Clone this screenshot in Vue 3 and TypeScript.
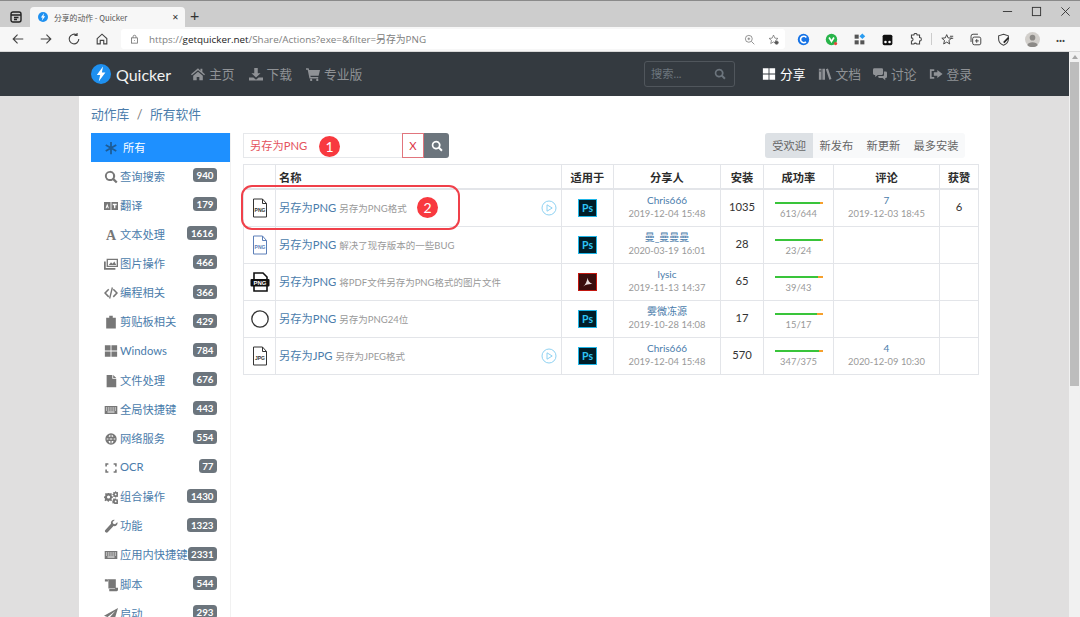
<template>
  <div class="screen">
    <div class="tabstrip">
      <svg class="tab-menu" viewBox="0 0 12 12"><rect x="1" y="1" width="10" height="10" rx="2" /><path d="M1 4h10M4 6.5h4.5M4 8.5h3" /></svg>
      <div class="tab">
        <svg class="bolt-logo small" viewBox="0 0 20 20"><circle cx="10" cy="10" r="10" /><path d="M12 2.5 5.8 11h3.4l-1.5 6.5L14.4 8.400h-3.500z" /></svg>
        <span class="tab-title">分享的动作 - Quicker</span>
        <span class="tab-close">✕</span>
      </div>
      <span class="tab-plus">+</span>
      <div class="win-controls">
        <svg viewBox="0 0 12 12"><path d="M1 6h10" /></svg>
        <svg viewBox="0 0 12 12"><rect x="1.500" y="1.500" width="9" height="9" /></svg>
        <svg viewBox="0 0 12 12"><path d="M1.500 1.500l9 9M10.500 1.500l-9 9" /></svg>
      </div>
    </div>

    <div class="toolbar">
      <svg class="tb" viewBox="0 0 16 16"><path d="M14 8H2.500M7.500 3l-5 5 5 5" /></svg>
      <svg class="tb" viewBox="0 0 16 16"><path d="M2 8h11.500M8.500 3l5 5-5 5" /></svg>
      <svg class="tb" viewBox="0 0 16 16"><path d="M13.500 8A5.500 5.500 0 1 1 11 3.400M11.500 1v3h-3" /></svg>
      <svg class="tb" viewBox="0 0 16 16"><path d="M2.500 7.500 8 2.500l5.500 5v6h-3.500v-4H6v4H2.500z" /></svg>
      <div class="address">
        <svg class="lock" viewBox="0 0 12 12"><rect x="2" y="4.500" width="8" height="7" /><path d="M4 4.500V3a2 2 0 0 1 4 0v1.500M6 7.500v1" /></svg>
        <span class="url">https://<b>getquicker.net</b>/Share/Actions?exe=&amp;filter=另存为PNG</span>
        <svg class="addr-ic zoom" viewBox="0 0 16 16"><circle cx="7" cy="7" r="5" /><path d="M11 11l4 4M5 7h4M7 5v4" /></svg>
        <svg class="addr-ic" viewBox="0 0 16 16"><path d="M8 1.500 10 6l4.500.4-3.400 3 1 4.500L8 11.500l-4 2.400 1-4.500-3.400-3L6 6z" /><circle cx="12.500" cy="12.500" r="2.500" fill="#555" /></svg>
      </div>
      <div class="extensions">
        <svg viewBox="0 0 16 16"><circle cx="8" cy="8" r="7" fill="#1673e6" /><path d="M11.500 5.500A4 4 0 1 0 11 11" fill="none" stroke="#fff" stroke-width="2" /></svg>
        <svg viewBox="0 0 16 16"><circle cx="8" cy="8" r="7" fill="#28b44a" /><path d="M5 5.500l3 5 3-5" fill="none" stroke="#fff" stroke-width="2" /><circle cx="13" cy="13" r="2" fill="#e6483c" /></svg>
        <svg viewBox="0 0 16 16"><rect x="2" y="2" width="5" height="5" fill="#555" /><rect x="2" y="9" width="5" height="5" fill="#555" /><rect x="9" y="9" width="5" height="5" fill="#555" /><rect x="9" y="1.500" width="5" height="5" fill="#2b9cf0" transform="rotate(45 11.500 4)" /></svg>
        <svg viewBox="0 0 16 16"><path d="M2 4a2 2 0 0 1 2-2h8a2 2 0 0 1 2 2v9a2 2 0 0 1-2 2H4a2 2 0 0 1-2-2z" fill="#111" /><circle cx="5.500" cy="11" r="1.600" fill="#fff" /><circle cx="10.500" cy="11" r="1.600" fill="#fff" /></svg>
        <svg viewBox="0 0 16 16"><path d="M6 2.500a2 2 0 0 1 4 0H13v3a2 2 0 0 1 0 4.500v3.500H9.500a2 2 0 0 0-3.500 0H3V10a2 2 0 0 0 0-4V2.500z" fill="none" stroke="#444" stroke-width="1.300" /></svg>
        <i class="ext-sep"></i>
        <svg viewBox="0 0 16 16"><path d="M7 2 8.700 6l4.300.4-3.300 2.800 1 4.300L7 11.200l-3.700 2.300 1-4.300L1 6.400 5.300 6zM11 4h4M12 6.500h3" fill="none" stroke="#444" stroke-width="1.200" /></svg>
        <svg viewBox="0 0 16 16"><rect x="4.500" y="5" width="10" height="9.500" rx="2" fill="none" stroke="#444" stroke-width="1.200" /><path d="M2.500 11V4a2.500 2.500 0 0 1 2.500-2.500h6M9.500 7.500v4.500M7.500 9.700h4.500" fill="none" stroke="#444" stroke-width="1.200" /></svg>
        <svg viewBox="0 0 16 16"><path d="M8 1.500 14 3.500v4c0 4-3 6.500-6 7.500-3-1-6-3.500-6-7.500v-4z" fill="none" stroke="#444" stroke-width="1.300" /><path d="M7.500 11 13.500 5l1.500 1.500-6 6z" fill="#222" /></svg>
        <svg class="avatar" viewBox="0 0 16 16"><circle cx="8" cy="8" r="8" fill="#d2cfcb" /><circle cx="8" cy="6" r="3" fill="#8c8a87" /><path d="M2.500 14c1-4 10-4 11 0a8 8 0 0 1-11 0z" fill="#8c8a87" /></svg>
        <span class="dots">···</span>
      </div>
    </div>

    <div class="viewport">
      <div class="site">
        <nav class="navbar">
          <svg class="bolt-logo" viewBox="0 0 20 20"><circle cx="10" cy="10" r="10" /><path d="M12 2.500 5.800 11h3.400l-1.500 6.500L14.400 8.400h-3.500z" /></svg>
          <span class="brand">Quicker</span>
          <div class="nav-left">
            <a v-for="n in navLeft" :key="n.text" class="nav-link">
              <svg class="ic nav-ic" viewBox="0 0 16 16"><path :d="icons[n.icon]" fill-rule="evenodd" /></svg><span class="nav-text">{{ n.text }}</span>
            </a>
          </div>
          <div class="nav-search">
            <span class="nav-text">搜索...</span>
            <svg class="ic" viewBox="0 0 16 16"><path :d="icons.search" fill-rule="evenodd" /></svg>
          </div>
          <div class="nav-right">
            <a v-for="n in navRight" :key="n.text" class="nav-link" :class="{ on: n.on }">
              <svg class="ic nav-ic" viewBox="0 0 16 16"><path :d="icons[n.icon]" fill-rule="evenodd" /></svg><span class="nav-text">{{ n.text }}</span>
            </a>
          </div>
        </nav>

        <div class="page">
          <main class="container">
            <div class="crumbs"><a>动作库</a><i>/</i><a>所有软件</a></div>
            <div class="columns">
              <aside class="sidebar">
                <div class="side-active"><svg class="aster" viewBox="0 0 16 16"><path d="M8 1v14M2 4.500l12 7M14 4.500l-12 7" /></svg><span class="side-text">所有</span></div>
                <div v-for="c in categories" :key="c.name" class="side-row">
                  <svg v-if="c.icon === 'font'" class="ic side-ic" viewBox="0 0 16 16"><text x="8" y="14" text-anchor="middle" class="ic-a">A</text></svg>
                  <svg v-else class="ic side-ic" viewBox="0 0 16 16"><path :d="icons[c.icon]" fill-rule="evenodd" /></svg>
                  <span class="side-name side-text">{{ c.name }}</span>
                  <span class="count">{{ c.count }}</span>
                </div>
              </aside>

              <section class="content">
                <div class="filters">
                  <div class="filter-box">
                    <span class="filter-input">另存为PNG</span>
                    <span class="filter-x">X</span>
                    <span class="filter-go"><svg class="ic" viewBox="0 0 16 16"><path :d="icons.search" fill-rule="evenodd" /></svg></span>
                  </div>
                  <div class="sorts">
                    <span v-for="(s, i) in sorts" :key="s" class="sort" :class="{ on: i === 0 }">{{ s }}</span>
                  </div>
                </div>

                <table class="actions">
                  <colgroup>
                    <col v-for="w in colWidths" :key="w" :style="{ width: w + 'px' }" />
                  </colgroup>
                  <thead>
                    <tr>
                      <th></th>
                      <th class="left">名称</th>
                      <th>适用于</th>
                      <th>分享人</th>
                      <th>安装</th>
                      <th>成功率</th>
                      <th>评论</th>
                      <th>获赞</th>
                    </tr>
                  </thead>
                  <tbody>
                    <tr v-for="r in rows" :key="r.user + r.date">
                      <td class="cell-icon">
                        <svg v-if="r.file === 'plain' || r.file === 'blue' || r.file === 'jpg'" class="file" :class="r.file" viewBox="0 0 16 20">
                          <path d="M1.500 1h9l4 4.500V19h-13zM10.500 1v4.500h4" />
                          <text x="8" y="14" text-anchor="middle">{{ r.file === 'jpg' ? 'JPG' : 'PNG' }}</text>
                        </svg>
                        <svg v-else-if="r.file === 'black'" class="file black" viewBox="0 0 20 20">
                          <path d="M4 1h9l4 4v14H4z" />
                          <rect x="0.500" y="7" width="19" height="7.500" rx="1" />
                          <text x="10" y="13" text-anchor="middle">PNG</text>
                        </svg>
                        <svg v-else class="file ring" viewBox="0 0 20 20"><circle cx="10" cy="10" r="8.200" /></svg>
                      </td>
                      <td class="cell-name text-cell">
                        <a class="title">{{ r.title }}</a>
                        <span class="desc">{{ r.desc }}</span>
                        <svg v-if="r.play" class="play" viewBox="0 0 16 16"><circle cx="8" cy="8" r="7" /><path d="M6 4.800v6.400L11.200 8z" /></svg>
                      </td>
                      <td class="cell-app">
                        <span v-if="r.app === 'ps'" class="app ps">Ps</span>
                        <span v-else class="app pdf"><svg viewBox="0 0 16 16"><path d="M2.500 13C5 11 7 7 7.500 3c.5 3 2 6 6 7.500C10 10 6 11 2.500 13z" /></svg></span>
                      </td>
                      <td class="text-cell">
                        <a class="user">{{ r.user }}</a>
                        <div class="sub">{{ r.date }}</div>
                      </td>
                      <td class="num text-cell">{{ r.installs }}</td>
                      <td class="text-cell">
                        <div class="rate"><i :style="{ width: (r.ok / r.total) * 100 + '%' }"></i></div>
                        <div class="sub rate-text">{{ r.ok }}/{{ r.total }}</div>
                      </td>
                      <td class="text-cell">
                        <template v-if="r.comments">
                          <a class="user">{{ r.comments }}</a>
                          <div class="sub">{{ r.commentDate }}</div>
                        </template>
                      </td>
                      <td class="num text-cell">{{ r.likes }}</td>
                    </tr>
                  </tbody>
                </table>

                <!-- red annotations drawn over the shot -->
                <span class="mark mark-one">1</span>
                <span class="mark mark-two">2</span>
                <span class="outline"></span>
              </section>
            </div>
          </main>
        </div>
      </div>
      <div class="scrollbar">
        <span class="scroll-up"></span>
        <span class="scroll-thumb"></span>
      </div>
    </div>
  </div>
</template>

<script setup lang="ts">
const icons: Record<string, string> = {
  home: 'M8 1.500 0 8.300l1 1.200L8 3.600l7 5.900 1-1.200-3-2.500V2h-2.200v2.200zM2.500 10v5h4v-3.500h3V15h4v-5L8 5.300z',
  download: 'M6 1h4v6h3.200L8 12 2.800 7H6zM0 12h5l3 2.500 3-2.500h5v3.500H0z',
  cart: 'M0 1.500h3l.6 2H16l-1.600 6.500H5l.4 1.500H14V13H4L1.900 3.200H0zM5.500 13.500a1.300 1.300 0 1 1 0 2.500 1.300 1.300 0 0 1 0-2.500zM12.500 13.500a1.300 1.300 0 1 1 0 2.500 1.300 1.300 0 0 1 0-2.500z',
  search: 'M6.800 1a5.800 5.800 0 1 0 3.300 10.600l3.600 3.600 1.800-1.800-3.600-3.600A5.800 5.800 0 0 0 6.800 1zm0 2.200a3.600 3.600 0 1 1 0 7.200 3.600 3.600 0 0 1 0-7.200z',
  windows: 'M1 1.500h6.500V7.500H1zM8.500 1.500H15V7.500H8.500zM1 8.500h6.500v6H1zM8.500 8.500H15v6H8.500z',
  books: 'M1 2h3v12.500H1zM5 2h3v12.500H5zM9 2.500l2.400-.8 4 12-2.400.8zM1.500 4v1H3.500V4z',
  comments: 'M1.500 1.500h8.500a1.500 1.500 0 0 1 1.500 1.500v4.500a1.500 1.500 0 0 1-1.500 1.500H5.500L2.500 11.500V9h-1A1.500 1.500 0 0 1 0 7.500V3a1.500 1.500 0 0 1 1.500-1.500zM12.500 5H14.500A1.500 1.500 0 0 1 16 6.500V11a1.500 1.500 0 0 1-1.500 1.500H14V15l-3-2.500H7.500A1.500 1.500 0 0 1 6 11v-.8h5.500a1 1 0 0 0 1-1z',
  signin: 'M1 2.500h5v2H3v7h3v2H1zM9.500 3.500 15.500 8l-6 4.500V10H5.500V6h4z',
  language: 'M0 3.500h7.500v9H0zM8.500 3.500H16v9H8.500zM3.700 5 1.800 10.500h1.200l.7-2 .7 2h1.200zM10 5.500h4.500v1.500h-1.500v3.500h-1.500V7H10z',
  images: 'M3 2h13v9.500H3zM4.500 3.500v6.500h10V3.500zM5.500 9l2.500-3 1.800 1.800 2-2.800L14 9zM0 5h2v7.500h11v2H0z',
  code: 'M4.800 3 6 4.200 2.400 8 6 11.800 4.800 13 0 8zM11.200 3 16 8l-4.800 5-1.200-1.200L13.600 8 10 4.200zM8.800 1.500l1.500.4L7.200 14.500l-1.500-.4z',
  clipboard: 'M6 0.800h4V3h3.500v12.500h-11V3H6z',
  file: 'M3 1h6.500v4.500H14V15H3zM10.500 1 14 4.500h-3.500z',
  keyboard: 'M.800 3.500h14.400v9H.800zM2.200 5v1.300h1.500V5zM4.700 5v1.300h1.500V5zM7.200 5v1.300h1.500V5zM9.700 5v1.300h1.500V5zM12.200 5v1.300h1.500V5zM2.200 7.300v1.300h1.500V7.300zM4.700 7.300v1.300h1.500V7.300zM7.200 7.300v1.300h1.500V7.300zM9.700 7.300v1.300h1.500V7.300zM12.200 7.300v1.300h1.500V7.300zM4 9.600v1.300h8V9.600z',
  globe: 'M8 1.500a6.500 6.500 0 1 1 0 13 6.500 6.500 0 0 1 0-13zM7.300 3v2.500H5.200C5.500 4.200 6.300 3.200 7.300 3zM8.700 3c1 .2 1.800 1.200 2.100 2.500H8.700zM3.100 7.300A5 5 0 0 0 3.100 8.700H5c0-.5 0-1 .1-1.400zM6.500 7.300v1.400h3V7.300zM11 7.300c.1.400.1.900 0 1.400h1.900a5 5 0 0 0 0-1.400zM5.200 10.200h2.100V13c-1-.2-1.800-1.400-2.100-2.800zM8.700 10.200h2.100c-.3 1.400-1.100 2.600-2.100 2.800z',
  scan: 'M1.500 2.500h3.500v1.800H3.300v2H1.500zM11 2.500h3.500v3.800h-1.800v-2H11zM1.500 9.700h1.800v2H5v1.800H1.500zM12.700 9.700h1.800v3.800H11v-1.800h1.700z',
  gears: 'M5.500 3.500 7 4l1-.7 1.200 1.200-.7 1 .5 1.500 1.200.3v1.500l-1.200.3-.5 1.500.7 1-1.200 1.200-1-.7-1.500.5-.3 1.200H4.500l-.3-1.200-1.500-.5-1 .7L.500 11.600l.7-1-.5-1.500L0 8.800V7.300l1.200-.3.500-1.500-.7-1L2.200 3.300l1 .7 1.500-.5zM5.200 6.200a1.800 1.800 0 1 0 0 3.600 1.800 1.800 0 0 0 0-3.600zM12.800 1.500h1l.2.800.8.300.7-.4.700.7-.4.700.3.800.8.200v1l-.8.200-.3.800.4.700-.7.700-.7-.4-.8.300-.2.800h-1l-.2-.8-.8-.3-.7.4-.7-.7.4-.7-.3-.8-.8-.2v-1l.8-.2.3-.8-.4-.7.7-.7.7.4.8-.3zM13.300 4a1 1 0 1 0 0 2 1 1 0 0 0 0-2zM12.800 9.800h1l.2.800.8.300.7-.4.700.7-.4.700.3.800.8.200v1l-.8.200-.3.800.4.700-1.400.7-.7-.4-.8.300h-1.500l-.2-.8-.8-.3-.7.4-.7-.7.4-.7-.3-.8v-1l.8-.5.3-.8-.4-.7.7-.7.7.4.8-.3zM13.300 12a1 1 0 1 0 0 2 1 1 0 0 0 0-2z',
  wrench: 'M15.500 4.500c0 2.500-2.300 4.200-4.600 3.500L4.500 14.800a1.800 1.800 0 0 1-3-2.300L8 5.300C7.300 3 9.500.500 12.200 1L9.800 3.500l.8 2 2 .6 2.500-2.300c.2.200.4.500.4.700z',
  scroll: 'M1 1.500h3.500V4H1zM4 1.500h9.500v9.500h2.500v2.500a1.500 1.500 0 0 1-1.500 1.500H6V12.500H12.500v-.5H5V3.500A2 2 0 0 0 4 1.500z',
  plane: 'M16 1 0 10l4 1.500L13 4.500 6 12.500V16l2.500-3 3.500 1.500z',
}

const navLeft = [
  { icon: 'home', text: '主页' },
  { icon: 'download', text: '下载' },
  { icon: 'cart', text: '专业版' },
]

const navRight = [
  { icon: 'windows', text: '分享', on: true },
  { icon: 'books', text: '文档', on: false },
  { icon: 'comments', text: '讨论', on: false },
  { icon: 'signin', text: '登录', on: false },
]

const categories = [
  { icon: 'search', name: '查询搜索', count: 940 },
  { icon: 'language', name: '翻译', count: 179 },
  { icon: 'font', name: '文本处理', count: 1616 },
  { icon: 'images', name: '图片操作', count: 466 },
  { icon: 'code', name: '编程相关', count: 366 },
  { icon: 'clipboard', name: '剪贴板相关', count: 429 },
  { icon: 'windows', name: 'Windows', count: 784 },
  { icon: 'file', name: '文件处理', count: 676 },
  { icon: 'keyboard', name: '全局快捷键', count: 443 },
  { icon: 'globe', name: '网络服务', count: 554 },
  { icon: 'scan', name: 'OCR', count: 77 },
  { icon: 'gears', name: '组合操作', count: 1430 },
  { icon: 'wrench', name: '功能', count: 1323 },
  { icon: 'keyboard', name: '应用内快捷键', count: 2331 },
  { icon: 'scroll', name: '脚本', count: 544 },
  { icon: 'plane', name: '启动', count: 293 },
]

const sorts = ['受欢迎', '新发布', '新更新', '最多安装']

const colWidths = [32, 286, 52, 107, 43, 70, 106, 39]

const rows = [
  { file: 'plain', title: '另存为PNG', desc: '另存为PNG格式', play: true, app: 'ps', user: 'Chris666', date: '2019-12-04 15:48', installs: 1035, ok: 613, total: 644, comments: '7', commentDate: '2019-12-03 18:45', likes: '6' },
  { file: 'blue', title: '另存为PNG', desc: '解决了现存版本的一些BUG', play: false, app: 'ps', user: '曼_曼曼曼', date: '2020-03-19 16:01', installs: 28, ok: 23, total: 24, comments: '', commentDate: '', likes: '' },
  { file: 'black', title: '另存为PNG', desc: '将PDF文件另存为PNG格式的图片文件', play: false, app: 'pdf', user: 'lysic', date: '2019-11-13 14:37', installs: 65, ok: 39, total: 43, comments: '', commentDate: '', likes: '' },
  { file: 'ring', title: '另存为PNG', desc: '另存为PNG24位', play: false, app: 'ps', user: '雾微冻源', date: '2019-10-28 14:08', installs: 17, ok: 15, total: 17, comments: '', commentDate: '', likes: '' },
  { file: 'jpg', title: '另存为JPG', desc: '另存为JPEG格式', play: true, app: 'ps', user: 'Chris666', date: '2019-12-04 15:48', installs: 570, ok: 347, total: 375, comments: '4', commentDate: '2020-12-09 10:30', likes: '' },
]
</script>

<style>
html,
body {
  margin: 0;
  overflow: hidden;
}
</style>

<style scoped>
.screen {
  width: 1080px;
  height: 617px;
  display: flex;
  flex-direction: column;
  overflow: hidden;
  font-family: Lato, "Noto Sans CJK SC", sans-serif;
  font-size: 11.25px;
  color: #444;
}

/* browser frame */
.tabstrip {
  height: 26px;
  flex: none;
  display: flex;
  align-items: flex-end;
  background: #cdcdcd;
  border-top: 1px solid #8a8a8a;
}
.tab-menu {
  width: 12px;
  height: 12px;
  margin: 0 8px 4px 10px;
  fill: none;
  stroke: #222;
  stroke-width: 1.4;
}
.tab {
  width: 155px;
  height: 20px;
  box-sizing: border-box;
  padding: 0 6px 0 8px;
  display: flex;
  align-items: center;
  background: #f7f7f7;
  border-radius: 4px 4px 0 0;
}
.bolt-logo {
  width: 20px;
  height: 20px;
  flex: none;
  fill: #1e90f0;
}
.bolt-logo path {
  fill: #fff;
}
.bolt-logo.small {
  width: 10px;
  height: 10px;
}
.tab-title {
  margin-left: 6px;
  flex: 1;
  font-family: "Noto Sans CJK SC", sans-serif;
  font-size: 7.800px;
  color: #555;
}
.tab-close {
  font-size: 8px;
  color: #333;
}
.tab-plus {
  margin: 0 0 3px 5px;
  font-size: 16px;
  line-height: 18px;
  color: #333;
}
.win-controls {
  margin-left: auto;
  align-self: center;
  display: flex;
  gap: 18px;
  padding-right: 9px;
  margin-bottom: 5px;
}
.win-controls svg {
  width: 11px;
  height: 11px;
  fill: none;
  stroke: #333;
}
.toolbar {
  height: 25px;
  flex: none;
  box-sizing: border-box;
  display: flex;
  align-items: center;
  padding-left: 11px;
  gap: 14px;
  background: #f7f7f7;
  border-bottom: 1px solid #d8d8d8;
}
.tb {
  width: 14px;
  height: 14px;
  flex: none;
  fill: none;
  stroke: #444;
  stroke-width: 1.300;
}
.address {
  width: 664px;
  height: 20px;
  margin-left: -2px;
  flex: none;
  display: flex;
  align-items: center;
  padding-left: 9px;
  box-sizing: border-box;
  background: #fff;
  border-radius: 3px;
}
.lock {
  width: 9px;
  height: 10px;
  fill: none;
  stroke: #666;
}
.url {
  margin-left: 10px;
  flex: 1;
  font-family: "Open Sans", "Noto Sans CJK SC", sans-serif;
  font-size: 9.850px;
  color: #808080;
}
.url b {
  font-weight: 400;
  color: #222;
}
.addr-ic {
  width: 11px;
  height: 11px;
  margin-right: 6px;
  fill: none;
  stroke: #666;
}
.zoom {
  margin-right: 13px;
}
.extensions {
  display: flex;
  align-items: center;
  margin-left: -2px;
  gap: 15px;
}
.extensions svg {
  width: 13px;
  height: 13px;
  flex: none;
}
.ext-sep {
  width: 1px;
  height: 12px;
  margin: 0 -6px;
  background: #ccc;
}
.extensions .avatar {
  width: 15px;
  height: 15px;
}
.dots {
  margin-left: 1px;
  font-size: 11px;
  font-weight: 700;
  color: #444;
}

.viewport {
  flex: 1;
  min-height: 0;
  display: flex;
}
.site {
  width: 1069px;
  display: flex;
  flex-direction: column;
  background: #e0dfdf;
}
.scrollbar {
  width: 11px;
  display: flex;
  flex-direction: column;
  background: #f1f1f1;
}
.scroll-up {
  height: 10px;
  flex: none;
  position: relative;
}
.scroll-up::after {
  content: "";
  position: absolute;
  left: 3px;
  top: 3px;
  border: 3px solid transparent;
  border-top: 0;
  border-bottom: 4px solid #a6a6a6;
}
.scroll-thumb {
  height: 324px;
  margin: 0 1px;
  background: #bdbdbd;
}

/* site nav */
.navbar {
  height: 44px;
  flex: none;
  display: flex;
  align-items: center;
  padding-left: 91px;
  background: #343a40;
}
.brand {
  margin-left: 5px;
  font-size: 16px;
  color: #f2f2f2;
}
.nav-left {
  margin-left: 20px;
  display: flex;
  gap: 14px;
}
.nav-right {
  margin-left: 27px;
  margin-right: 97px;
  display: flex;
  gap: 12px;
}
.nav-link {
  display: flex;
  align-items: center;
  gap: 4px;
  font-size: 12.750px;
  color: #8f9296;
}
.nav-text {
  margin-bottom: 2px;
}
.nav-link.on {
  color: #fff;
}
.ic {
  fill: currentColor;
  flex: none;
}
.nav-ic {
  width: 14px;
  height: 14px;
}
.nav-search {
  width: 91px;
  height: 26px;
  margin-left: auto;
  box-sizing: border-box;
  display: flex;
  align-items: center;
  justify-content: space-between;
  padding: 0 8px 0 6px;
  border: 1px solid #50565c;
  border-radius: 3px;
  font-size: 11.250px;
  color: #6c757d;
}
.nav-search .ic {
  width: 12px;
  height: 12px;
}

/* page */
.page {
  flex: 1;
  min-height: 0;
  padding-left: 79px;
}
.container {
  width: 911px;
  height: 100%;
  box-sizing: border-box;
  background: #fff;
  padding: 0 12px;
  overflow: hidden;
}
.crumbs {
  height: 37px;
  padding-bottom: 2px;
  box-sizing: border-box;
  display: flex;
  align-items: center;
  font-size: 12.750px;
  color: #4a7cab;
}
.crumbs i {
  margin: 0 7.500px;
  font-style: normal;
  color: #777;
}
.columns {
  display: flex;
}
.sidebar {
  width: 140px;
  flex: none;
  box-sizing: border-box;
  border-right: 1px solid #f1f1f1;
}
.side-active {
  height: 29px;
  display: flex;
  align-items: center;
  padding-left: 13px;
  gap: 5px;
  background: #1e90ff;
  color: #fff;
}
.aster {
  width: 14px;
  height: 14px;
  fill: none;
  stroke: #1d5c96;
  stroke-width: 2;
}
.side-text {
  margin-bottom: 2px;
}
.side-row {
  height: 29.150px;
  display: flex;
  align-items: center;
  padding-left: 13px;
  padding-right: 13px;
}
.side-ic {
  width: 14px;
  height: 14px;
  margin-right: 2px;
  color: #777;
}
.ic-a {
  font-family: "Liberation Serif", serif;
  font-weight: 700;
  font-size: 16px;
}
.side-name {
  flex: 1;
  white-space: nowrap;
  color: #4a7cab;
}
.count {
  flex: none;
  padding: 0 3.500px;
  margin-bottom: 3px;
  height: 14px;
  line-height: 14px;
  border-radius: 3.500px;
  background: #6c757d;
  color: #fff;
  font-size: 9.750px;
  font-weight: 700;
}

.content {
  position: relative;
  margin-left: 12px;
  width: 735px;
  flex: none;
}
.filters {
  height: 25px;
  display: flex;
  justify-content: space-between;
  padding-right: 13px;
  margin-bottom: 6px;
}
.filter-box {
  display: flex;
}
.filter-input {
  width: 159px;
  box-sizing: border-box;
  padding-left: 6px;
  line-height: 24px;
  border: 1px solid #e6e8eb;
  border-right: 0;
  color: #e4535d;
}
.filter-x {
  width: 22px;
  box-sizing: border-box;
  text-align: center;
  line-height: 23px;
  border: 1px solid #e1757d;
  color: #dc3545;
  font-size: 11.250px;
}
.filter-go {
  width: 25px;
  display: flex;
  align-items: center;
  justify-content: center;
  background: #6c757d;
  border-radius: 0 3px 3px 0;
  color: #fff;
}
.filter-go .ic {
  width: 12px;
  height: 12px;
}
.sorts {
  display: flex;
  background: #f8f9fa;
  border-radius: 3px;
}
.sort {
  padding: 0 6.600px;
  line-height: 25px;
  color: #666;
}
.sort.on {
  padding: 0 7px;
  background: #dde1e5;
  border-radius: 3px 0 0 3px;
}

.actions {
  width: 735px;
  table-layout: fixed;
  border-collapse: collapse;
  color: #333;
}
.actions th,
.actions td {
  padding: 0;
  border: 1px solid #e3e5e9;
  text-align: center;
}
.actions th {
  height: 23px;
  border-bottom-width: 2px;
  font-weight: 700;
  color: #2c2c2c;
}
.actions th.left {
  text-align: left;
  padding-left: 3px;
}
.actions td {
  height: 36px;
}
.actions td.text-cell {
  padding-bottom: 3px;
  height: 33px;
}
.cell-icon {
  line-height: 0;
}
.file {
  height: 20px;
  width: 20px;
}
.file path {
  fill: #fff;
  stroke: #333;
  stroke-width: 1;
}
.file text {
  font-family: "Liberation Sans", sans-serif;
  font-weight: 700;
  font-size: 5px;
  fill: #333;
}
.file.blue path {
  stroke: #5c7fb8;
}
.file.blue text {
  fill: #5c7fb8;
}
.file.black path {
  stroke: #111;
  stroke-width: 1.600;
}
.file.black rect {
  fill: #111;
}
.file.black text {
  fill: #fff;
  font-size: 6px;
}
.file.ring circle {
  fill: none;
  stroke: #333;
  stroke-width: 1.300;
}
.actions .cell-name {
  position: relative;
  text-align: left;
  padding-left: 3px;
}
.title {
  color: #4a7cab;
}
.desc {
  margin-left: 3px;
  font-size: 9.500px;
  color: #999;
}
.play {
  position: absolute;
  right: 4px;
  top: 10px;
  width: 16px;
  height: 16px;
  fill: none;
  stroke: #8fd2f2;
  stroke-width: 1;
}
.app {
  display: inline-flex;
  align-items: center;
  justify-content: center;
  width: 19px;
  height: 18px;
  box-sizing: border-box;
  vertical-align: middle;
}
.ps {
  background: #001e29;
  border: 1px solid #1fb6e8;
  color: #2fc4f5;
  font-size: 10.500px;
  font-weight: 700;
}
.pdf {
  background: #3a0d0d;
  border: 1px solid #c3170f;
}
.pdf svg {
  width: 14px;
  height: 14px;
  fill: #e8dcdc;
}
.user {
  display: block;
  line-height: 14px;
  color: #4a7cab;
  font-size: 10px;
}
.sub {
  line-height: 14px;
  font-size: 9.400px;
  color: #999;
}
.num {
  font-size: 11.250px;
}
.rate {
  width: 48px;
  height: 2px;
  margin: 9px auto 3px;
  background: #f6a02c;
}
.rate i {
  display: block;
  height: 100%;
  background: #39c43a;
}
.rate-text {
  line-height: 14px;
}

/* annotations */
.mark {
  position: absolute;
  width: 21px;
  height: 21px;
  border-radius: 50%;
  background: #f8393f;
  color: #fff;
  text-align: center;
  line-height: 21px;
  font-size: 14px;
}
.mark-one {
  left: 76px;
  top: 3px;
}
.mark-two {
  left: 174px;
  top: 64px;
}
.outline {
  position: absolute;
  left: -2px;
  top: 52px;
  width: 215px;
  height: 41px;
  border: 2.500px solid #f0404a;
  border-radius: 11px;
}
</style>
